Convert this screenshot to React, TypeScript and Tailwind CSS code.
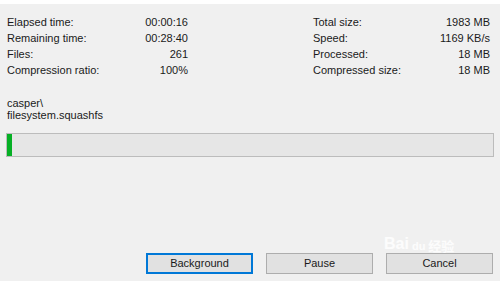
import React from "react";

const leftStats = [
  ["Elapsed time:", "00:00:16"],
  ["Remaining time:", "00:28:40"],
  ["Files:", "261"],
  ["Compression ratio:", "100%"],
];

const rightStats = [
  ["Total size:", "1983 MB"],
  ["Speed:", "1169 KB/s"],
  ["Processed:", "18 MB"],
  ["Compressed size:", "18 MB"],
];

const StatBlock = ({ rows, width }: { rows: string[][]; width: string }) => (
  <div className={width}>
    {rows.map(([label, value]) => (
      <div key={label} className="flex justify-between h-[16px] leading-[16px]">
        <span>{label}</span>
        <span>{value}</span>
      </div>
    ))}
  </div>
);

const App = () => {
  const progress = 1;

  return (
    <div className="relative w-[500px] h-[281px] bg-[#f0f0f0] text-[11px] text-[#1a1a1a] font-['Liberation_Sans',Arial,sans-serif] overflow-hidden">
      <div className="h-[4px] bg-white" />

      <div className="flex pl-[7px] pt-[10px]">
        <StatBlock rows={leftStats} width="w-[181px]" />
        <div className="w-[125px]" />
        <StatBlock rows={rightStats} width="w-[177px]" />
      </div>

      <div className="pl-[7px] mt-[19px] leading-[12px]">
        <div>casper\</div>
        <div>filesystem.squashfs</div>
      </div>

      <div className="mx-[6px] mt-[12px] h-[24px] border border-[#bcbcbc] bg-[#e6e6e6]">
        <div className="h-full bg-[#06b025]" style={{ width: `${progress}%` }} />
      </div>

      <div className="flex justify-end gap-[13px] pr-[7px] mt-[96px]">
        <button className="w-[107px] h-[21px] border-2 border-[#0078d7] bg-[#e1e1e1] text-[11px]">
          Background
        </button>
        <button className="w-[107px] h-[21px] border border-[#adadad] bg-[#e1e1e1] text-[11px]">
          Pause
        </button>
        <button className="w-[107px] h-[21px] border border-[#adadad] bg-[#e1e1e1] text-[11px]">
          Cancel
        </button>
      </div>

      {/* watermark */}
      <div className="absolute left-[384px] top-[236px] text-white/80 pointer-events-none leading-none">
        <div className="flex items-end gap-[1px] text-[16px] font-bold">
          <span>Bai</span>
          <span className="text-[11px] px-[2px]">du</span>
          <span className="text-[13px] font-['Noto_Sans_CJK_SC',sans-serif]">经验</span>
        </div>
      </div>
    </div>
  );
};

export default App;
